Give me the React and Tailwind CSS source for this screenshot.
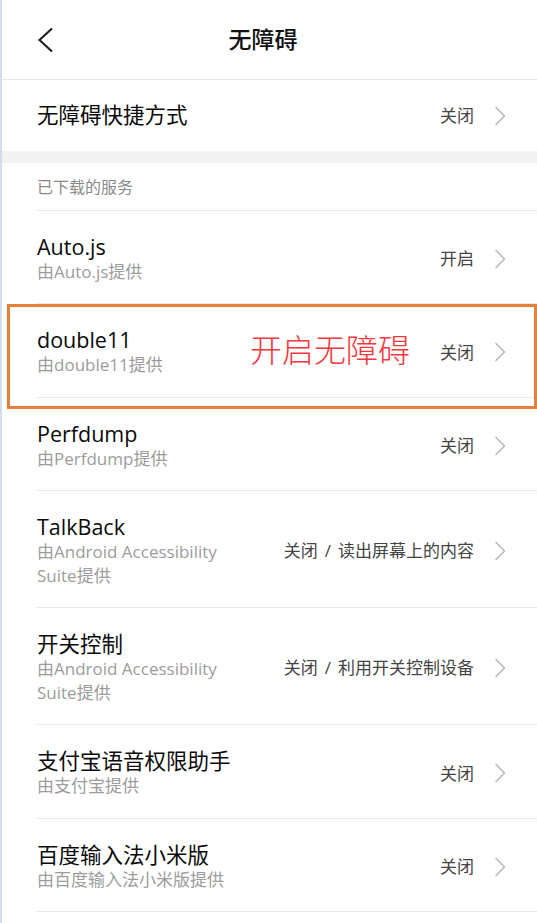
import React from "react";

const Chevron = () => (
  <svg width="12" height="20" viewBox="0 0 12 20" className="shrink-0">
    <polyline points="1.5,1 10.5,10 1.5,19" fill="none" stroke="#b5b5b5" strokeWidth="1.4" />
  </svg>
);

const rows = [
  { title: "Auto.js", sub: "由Auto.js提供", right: "开启" },
  { title: "double11", sub: "由double11提供", right: "关闭", mark: true },
  { title: "Perfdump", sub: "由Perfdump提供", right: "关闭" },
  { title: "TalkBack", sub: "由Android Accessibility\nSuite提供", right: "关闭", desc: "读出屏幕上的内容" },
  { title: "开关控制", sub: "由Android Accessibility\nSuite提供", right: "关闭", desc: "利用开关控制设备" },
  { title: "支付宝语音权限助手", sub: "由支付宝提供", right: "关闭" },
  { title: "百度输入法小米版", sub: "由百度输入法小米版提供", right: "关闭" },
];

function Row({ r }) {
  return (
    <div className="relative">
      <div className="ml-[35px] border-b border-[#e8e8e8] pr-[31px] flex items-center pt-[23px] pb-[19.3px]">
        <div className="flex-1 min-w-0">
          <div className="text-[21.5px] leading-[26px] text-[#0a0a0a]">{r.title}</div>
          <div className="text-[17px] leading-[24px] text-[#9c9c9c] whitespace-pre-line">{r.sub}</div>
        </div>
        <div className="flex items-center gap-[20px] shrink-0">
          <span className="text-[17px] text-[#444]">
            {r.right}
            {r.desc && (
              <>
                <span className="mx-[7px]">/</span>
                {r.desc}
              </>
            )}
          </span>
          <Chevron />
        </div>
      </div>
      {r.mark && (
        <>
          <div className="absolute left-[5px] right-[0px] top-0 h-[105px] border-[3px] border-[#e8803c] pointer-events-none" />
          <div className="absolute left-[248px] top-[26px] text-[32px] leading-[40px] font-light text-[#f5363b]">开启无障碍</div>
        </>
      )}
    </div>
  );
}

export default function App() {
  return (
    <div
      className="min-h-screen bg-white border-l-2 border-[#d3dcec]"
      style={{ fontFamily: '"Open Sans", "Noto Sans CJK SC", sans-serif' }}
    >
      <div className="h-[80px] flex items-center border-b border-[#e6e6e6]">
        <div className="w-[80px] pl-[36px] flex items-center">
          <svg width="16" height="26" viewBox="0 0 16 26">
            <polyline points="14,1.5 1.5,13 14,24.5" fill="none" stroke="#1a1a1a" strokeWidth="2" />
          </svg>
        </div>
        <div className="flex-1 text-center text-[23px] font-medium text-[#111]">无障碍</div>
        <div className="w-[93px]" />
      </div>

      <div className="h-[71px] pl-[35px] pr-[31px] flex items-center">
        <div className="flex-1 text-[21.5px] text-[#0a0a0a]">无障碍快捷方式</div>
        <div className="flex items-center gap-[20px]">
          <span className="text-[17px] text-[#444]">关闭</span>
          <Chevron />
        </div>
      </div>

      <div className="h-[12px] bg-[#f3f3f3]" />

      <div className="ml-[35px] h-[48px] border-b border-[#e8e8e8] flex items-center pt-[1px] text-[16px] text-[#8a8a8a]">
        已下载的服务
      </div>

      {rows.map((r) => (
        <Row key={r.title} r={r} />
      ))}
    </div>
  );
}
